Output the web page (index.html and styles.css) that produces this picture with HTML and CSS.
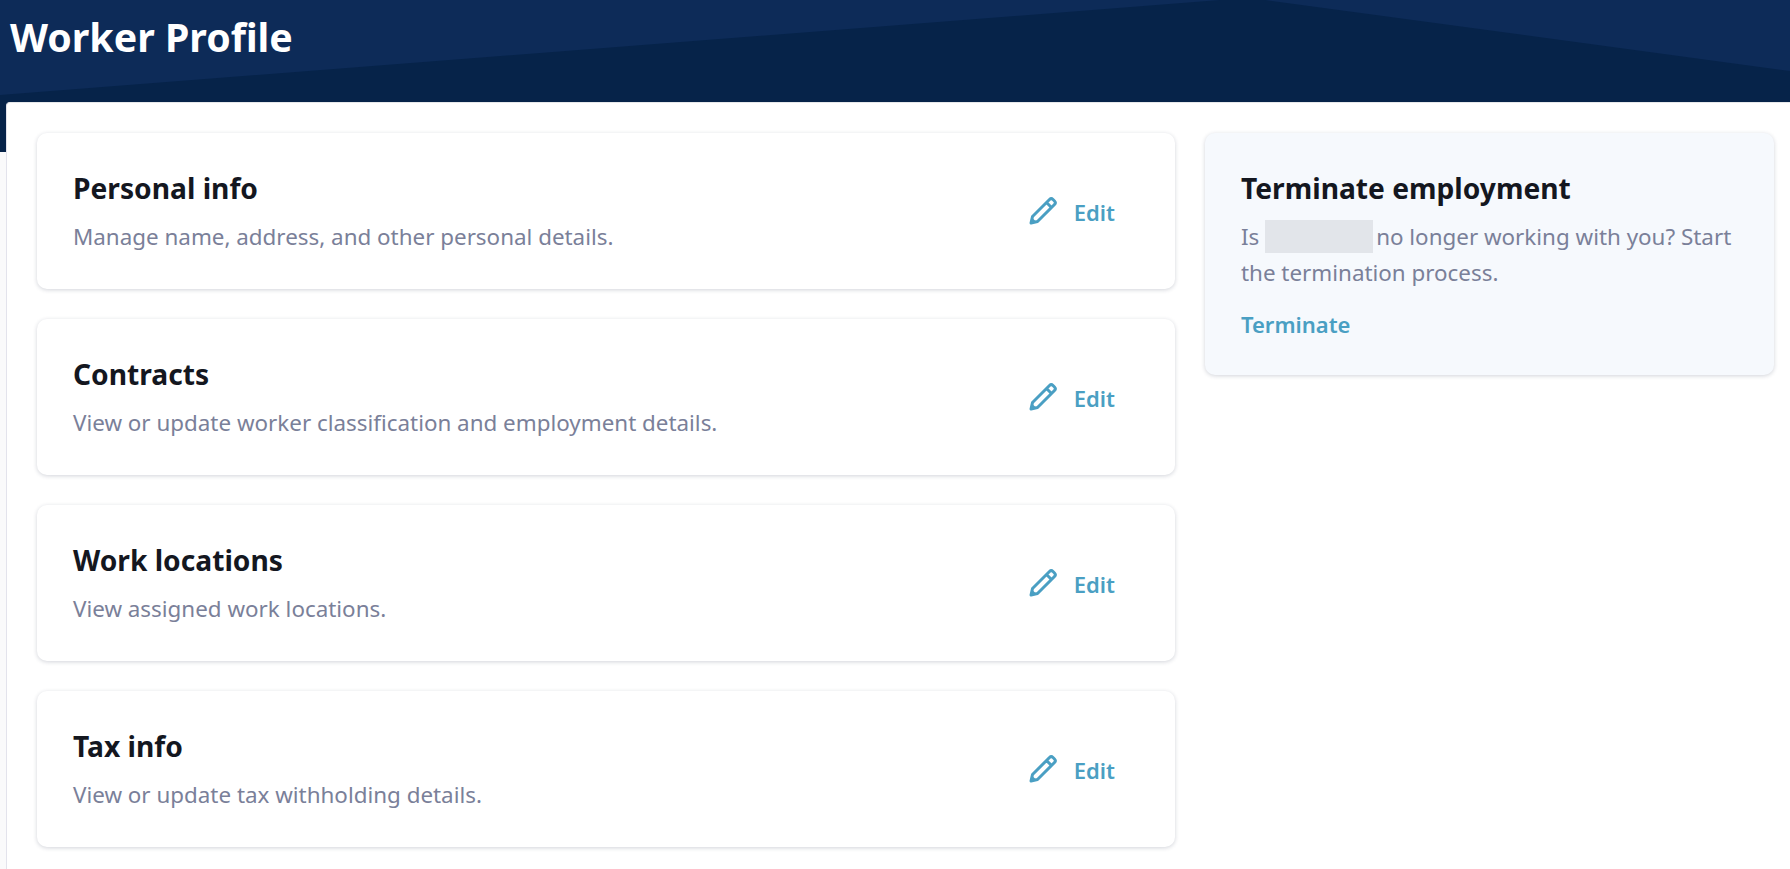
FILE: index.html
```html
<!DOCTYPE html>
<html lang="en">
<head>
<meta charset="utf-8">
<title>Worker Profile</title>
<link rel="stylesheet" href="styles.css">
</head>
<body>
<header class="hero">
  <svg class="hero-bg" viewBox="0 0 1790 152" preserveAspectRatio="none" aria-hidden="true">
    <polygon points="0,95 1220,0 1265,0 1790,71 1790,152 0,152" fill="#062349"/>
  </svg>
  <h1 class="hero-title">Worker Profile</h1>
</header>
<main class="panel">
  <section class="list">
    <article class="card">
      <div class="card-text">
        <h2 class="card-title">Personal info</h2>
        <p class="card-desc">Manage name, address, and other personal details.</p>
      </div>
      <a class="edit"><svg class="pencil" viewBox="0 0 30 30"><path class="pencil-tip" d="M2.500 27.500l1.400-6 4.600 4.600z"/><path class="pencil-line" d="M3 27l1.500-6.500L21.500 3.500a2.500 2.500 0 0 1 3.500 0l1.500 1.500a2.500 2.500 0 0 1 0 3.500L9.500 25.500z M18.500 6.500l5 5"/></svg><span class="edit-label">Edit</span></a>
    </article>
    <article class="card">
      <div class="card-text">
        <h2 class="card-title">Contracts</h2>
        <p class="card-desc">View or update worker classification and employment details.</p>
      </div>
      <a class="edit"><svg class="pencil" viewBox="0 0 30 30"><path class="pencil-tip" d="M2.500 27.500l1.400-6 4.600 4.600z"/><path class="pencil-line" d="M3 27l1.500-6.500L21.500 3.500a2.500 2.500 0 0 1 3.500 0l1.500 1.500a2.500 2.500 0 0 1 0 3.500L9.500 25.500z M18.500 6.500l5 5"/></svg><span class="edit-label">Edit</span></a>
    </article>
    <article class="card">
      <div class="card-text">
        <h2 class="card-title">Work locations</h2>
        <p class="card-desc">View assigned work locations.</p>
      </div>
      <a class="edit"><svg class="pencil" viewBox="0 0 30 30"><path class="pencil-tip" d="M2.500 27.500l1.400-6 4.600 4.600z"/><path class="pencil-line" d="M3 27l1.500-6.500L21.500 3.500a2.500 2.500 0 0 1 3.500 0l1.500 1.500a2.500 2.500 0 0 1 0 3.500L9.500 25.500z M18.500 6.500l5 5"/></svg><span class="edit-label">Edit</span></a>
    </article>
    <article class="card">
      <div class="card-text">
        <h2 class="card-title">Tax info</h2>
        <p class="card-desc">View or update tax withholding details.</p>
      </div>
      <a class="edit"><svg class="pencil" viewBox="0 0 30 30"><path class="pencil-tip" d="M2.500 27.500l1.400-6 4.600 4.600z"/><path class="pencil-line" d="M3 27l1.500-6.500L21.500 3.500a2.500 2.500 0 0 1 3.500 0l1.500 1.500a2.500 2.500 0 0 1 0 3.500L9.500 25.500z M18.500 6.500l5 5"/></svg><span class="edit-label">Edit</span></a>
    </article>
  </section>
  <aside class="side">
    <div class="side-card">
      <h2 class="card-title">Terminate employment</h2>
      <p class="side-desc">Is <span class="redacted"></span>no longer working with you? Start<br>the termination process.</p>
      <a class="terminate">Terminate</a>
    </div>
  </aside>
</main>
</body>
</html>
```
FILE: styles.css
```css
* { box-sizing: border-box; }
html, body { margin: 0; height: 100%; overflow: hidden; }
body {
  background: #fafafb;
  font-family: "Noto Sans", "Open Sans", sans-serif;
}
.hero {
  position: relative;
  height: 152px;
  background: #0d2b58;
  padding: 12px 10px 0;
}
.hero-bg { position: absolute; inset: 0; width: 100%; height: 100%; display: block; }
.hero-title {
  position: relative;
  margin: 0;
  font-size: 39.3px;
  line-height: 50px;
  font-weight: 700;
  color: #fff;
}
.panel {
  position: relative;
  margin: -50px 0 0 6px;
  height: 800px;
  background: #fff;
  border-left: 1px solid #e3e3ec;
  border-top: 1px solid #e6e8ea;
  border-top-left-radius: 4px;
  padding: 30px 16px 0 30px;
  display: grid;
  grid-template-columns: 1138px 569px;
  column-gap: 30px;
  align-items: start;
}
.list { display: flex; flex-direction: column; gap: 30px; }
.card {
  height: 156px;
  background: #fff;
  border-radius: 10px;
  box-shadow: 0 1px 4px rgba(30, 40, 70, .2);
  padding: 37px 60px 0 36px;
  display: flex;
  justify-content: space-between;
  align-items: flex-start;
}
.card-title {
  margin: 0;
  font-size: 28.2px;
  line-height: 36px;
  font-weight: 700;
  color: #14171f;
}
.card-desc {
  margin: 13px 0 0;
  font-size: 22.4px;
  line-height: 36px;
  color: #7a8099;
}
.edit {
  display: flex;
  align-items: center;
  gap: 16px;
  margin-top: 26px;
  font-size: 22px;
  font-weight: 600;
  color: #4a9fc3;
}
.edit-label { position: relative; top: 1px; }
.pencil { width: 30px; height: 30px; display: block; }
.pencil-tip { fill: currentColor; }
.pencil-line {
  fill: none;
  stroke: currentColor;
  stroke-width: 3;
  stroke-linejoin: round;
}
.side-card {
  height: 242px;
  background: #f6f9fd;
  border-radius: 10px;
  box-shadow: 0 1px 4px rgba(30, 40, 70, .2);
  padding: 37px 20px 0 36px;
}
.side-desc {
  margin: 13px 0 0;
  font-size: 22.4px;
  line-height: 36px;
  color: #7a8099;
}
.redacted {
  display: inline-block;
  width: 108px;
  height: 33px;
  margin-right: 3px;
  background: #e2e5ea;
  vertical-align: -8px;
}
.terminate {
  display: block;
  margin-top: 18px;
  font-size: 22px;
  line-height: 30px;
  font-weight: 600;
  color: #4a9fc3;
}
```
